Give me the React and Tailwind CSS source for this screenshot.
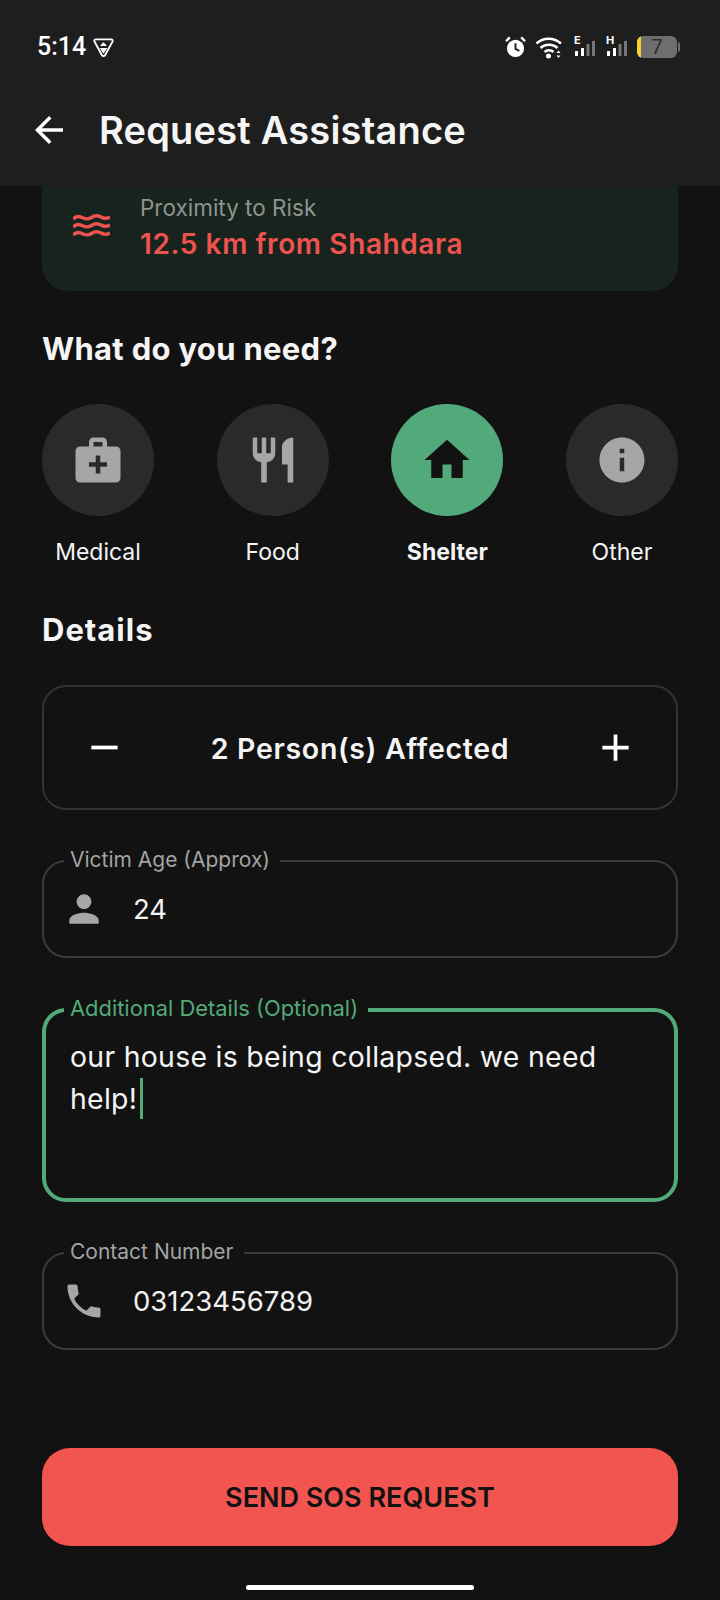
import React from 'react';
import { MdArrowBack, MdMedicalServices, MdRestaurant, MdHome, MdInfo, MdPerson, MdPhone, MdAdd, MdRemove } from 'react-icons/md';

const services = [
  { label: 'Medical', Icon: MdMedicalServices },
  { label: 'Food', Icon: MdRestaurant },
  { label: 'Shelter', Icon: MdHome, active: true },
  { label: 'Other', Icon: MdInfo },
];

function Signal({ letter }) {
  return (
    <div className="relative w-[22px] h-[22px]">
      <span className="absolute left-0 top-[-1px] text-[11px] leading-[11px] font-bold text-white">{letter}</span>
      <svg className="absolute inset-0" width="22" height="22" viewBox="0 0 22 22">
        <rect x="1" y="15" width="3" height="5" fill="#fff" />
        <rect x="7" y="12" width="3" height="8" fill="#fff" />
        <rect x="12.5" y="8" width="3" height="12" fill="#777" />
        <rect x="18" y="5" width="3" height="15" fill="#777" />
      </svg>
    </div>
  );
}

function StatusBar() {
  return (
    <div className="flex items-center justify-between h-[94px] pl-[37px] pr-[40px]">
      <div className="flex items-center gap-[7px]">
        <span className="text-[25px] font-medium text-white font-['Roboto',sans-serif]">5:14</span>
        <svg width="21" height="21" viewBox="0 0 22 21" fill="none">
          <path d="M3 2h16c1.5 0 2 1.2 1.4 2.4L12.6 18.6c-.7 1.2-2.5 1.2-3.2 0L1.6 4.4C1 3.2 1.500 2 3 2z" stroke="#fff" strokeWidth="2" />
          <path d="M8 8l3-3 3 3v1H8zM7 11h8l-4 6z" fill="#fff" />
        </svg>
      </div>
      <div className="flex items-center">
        <svg width="21" height="22" viewBox="0 0 22 22" className="mr-[9px]">
          <circle cx="11" cy="12.500" r="9" fill="#fff" />
          <path d="M11 7v6l4 2" stroke="#1e1e1e" strokeWidth="2" fill="none" />
          <path d="M1 5l4-4M21 5l-4-4" stroke="#fff" strokeWidth="2.500" />
        </svg>
        <svg width="28" height="24" viewBox="0 0 28 24" fill="none" className="mr-[11px]">
          <path d="M1.500 8.500C8 2 19 2 26 8.500" stroke="#fff" strokeWidth="2.500" />
          <path d="M5.500 13c4.500-4.500 12.500-4.500 17 0" stroke="#fff" strokeWidth="2.500" />
          <path d="M9.500 17c2.500-2.500 6.500-2.500 9 0" stroke="#fff" strokeWidth="2.500" />
          <circle cx="13.500" cy="21" r="2.500" fill="#fff" />
          <path d="M23.500 15.500l-2 2.500h4zM23.500 23l-2-2.500h4z" fill="#fff" />
        </svg>
        <Signal letter="E" />
        <div className="w-[10px]" />
        <Signal letter="H" />
        <div className="ml-[9px] flex items-center">
          <div className="relative w-[40px] h-[22px] rounded-[6px] overflow-hidden bg-[#6e6e6e] flex items-center justify-center">
            <div className="absolute left-0 top-0 bottom-0 w-[4px] bg-[#f6d32d]" />
            <span className="text-[21px] leading-none text-[#2e2e2e] font-['Roboto',sans-serif]">7</span>
          </div>
          <div className="w-[2px] h-[10px] ml-[1px] rounded-r bg-[#6e6e6e]" />
        </div>
      </div>
    </div>
  );
}

function WavesIcon() {
  return (
    <svg width="37" height="26" viewBox="0 0 37 26" fill="none" stroke="#ef5350" strokeWidth="3.400">
      <path d="M0 5c3-3 6-3 9-1.500s6 2.500 9.500 0 6-2.500 9.500-.5 6 2 9 0" />
      <path d="M0 13c3-3 6-3 9-1.500s6 2.500 9.500 0 6-2.500 9.500-.5 6 2 9 0" />
      <path d="M0 21c3-3 6-3 9-1.500s6 2.500 9.500 0 6-2.500 9.500-.5 6 2 9 0" />
    </svg>
  );
}

function Field({ label, Icon, value }) {
  return (
    <div className="relative h-[98px] rounded-[24px] border-2 border-[#3b3b3b] flex items-center pl-[18px]">
      <span className="absolute left-[20px] top-[-16px] pl-[6px] pr-[10px] bg-[#121212] text-[21px] leading-[28px] text-[#a3a3a3]">{label}</span>
      <Icon className="text-[#a6a6a6] w-[44px] h-[44px] shrink-0" />
      <span className="ml-[27px] text-[27.5px] leading-none text-[#f2f2f2] mt-[2px]">{value}</span>
    </div>
  );
}

export default function App() {
  return (
    <div className="w-[720px] h-[1600px] flex flex-col bg-[#121212] font-['Inter',sans-serif] overflow-hidden">
      <header className="h-[186px] shrink-0 bg-[#1e1e1e]">
        <StatusBar />
        <div className="flex items-center h-[72px] pl-[28px]">
          <MdArrowBack className="text-white w-[42px] h-[42px]" />
          <h1 className="ml-[29px] text-[38px] font-semibold text-[#f5f5f5] tracking-[0.2px]">Request Assistance</h1>
        </div>
      </header>

      <main className="flex-1 flex flex-col px-[42px]">
        <div className="h-[105px] shrink-0 rounded-b-[26px] bg-[#18231d] flex items-center pl-[31px] pb-[24px]">
          <WavesIcon />
          <div className="ml-[30px] flex flex-col">
            <span className="text-[22.500px] leading-[34px] text-[#8e9490]">Proximity to Risk</span>
            <span className="text-[28px] leading-[38px] font-semibold text-[#ef5350] tracking-[0.6px]">12.5 km from Shahdara</span>
          </div>
        </div>

        <h2 className="mt-[38px] text-[31px] leading-[40px] font-bold text-[#f5f5f5] tracking-[0.3px]">What do you need?</h2>

        <div className="mt-[35px] flex justify-between">
          {services.map(({ label, Icon, active }) => (
            <div key={label} className="relative w-[112px] flex flex-col items-center">
              <div className={active ? 'w-[112px] h-[112px] rounded-full bg-[#52a97a] flex items-center justify-center' : 'w-[112px] h-[112px] rounded-full bg-[#2a2a2a] flex items-center justify-center'}>
                <Icon className={active ? 'w-[54px] h-[54px] text-[#121212]' : 'w-[54px] h-[54px] text-[#a6a6a6]'} />
              </div>
              <span className={active ? 'mt-[20px] text-[23px] leading-[32px] font-bold text-[#f5f5f5]' : 'mt-[20px] text-[23px] leading-[32px] text-[#f5f5f5]'}>{label}</span>
            </div>
          ))}
        </div>

        <h2 className="mt-[42px] text-[31px] leading-[40px] font-bold text-[#f5f5f5] tracking-[1px]">Details</h2>

        <div className="mt-[35px] h-[125px] shrink-0 rounded-[24px] border-2 border-[#333333] flex items-center justify-between px-[38px]">
          <MdRemove className="text-white w-[45px] h-[45px]" />
          <span className="mt-[3px] text-[28.500px] font-semibold text-[#f5f5f5] tracking-[0.7px]">2 Person(s) Affected</span>
          <MdAdd className="text-white w-[45px] h-[45px]" />
        </div>

        <div className="mt-[50px]">
          <Field label="Victim Age (Approx)" Icon={MdPerson} value="24" />
        </div>

        <div className="relative mt-[50px] h-[194px] rounded-[24px] border-[4px] border-[#52a97a] pl-[24px] pt-[24px]">
          <span className="absolute left-[18px] top-[-18px] pl-[6px] pr-[10px] bg-[#121212] text-[21.900px] leading-[28px] text-[#52a97a]">Additional Details (Optional)</span>
          <p className="text-[28.400px] leading-[42px] text-[#f5f5f5] tracking-[0.3px] w-[560px]">
            our house is being collapsed. we need help!<span className="inline-block w-[3px] h-[41px] ml-[3px] align-[-10px] bg-[#52a97a]" />
          </p>
        </div>

        <div className="mt-[50px]">
          <Field label="Contact Number" Icon={MdPhone} value="03123456789" />
        </div>

        <button className="mt-[98px] h-[98px] shrink-0 rounded-[28px] bg-[#f25450] pt-[3px] text-[27px] font-semibold text-[#121212]">SEND SOS REQUEST</button>

        <div className="mt-[39px] mx-auto w-[228px] h-[5px] rounded-full bg-white" />
      </main>
    </div>
  );
}
